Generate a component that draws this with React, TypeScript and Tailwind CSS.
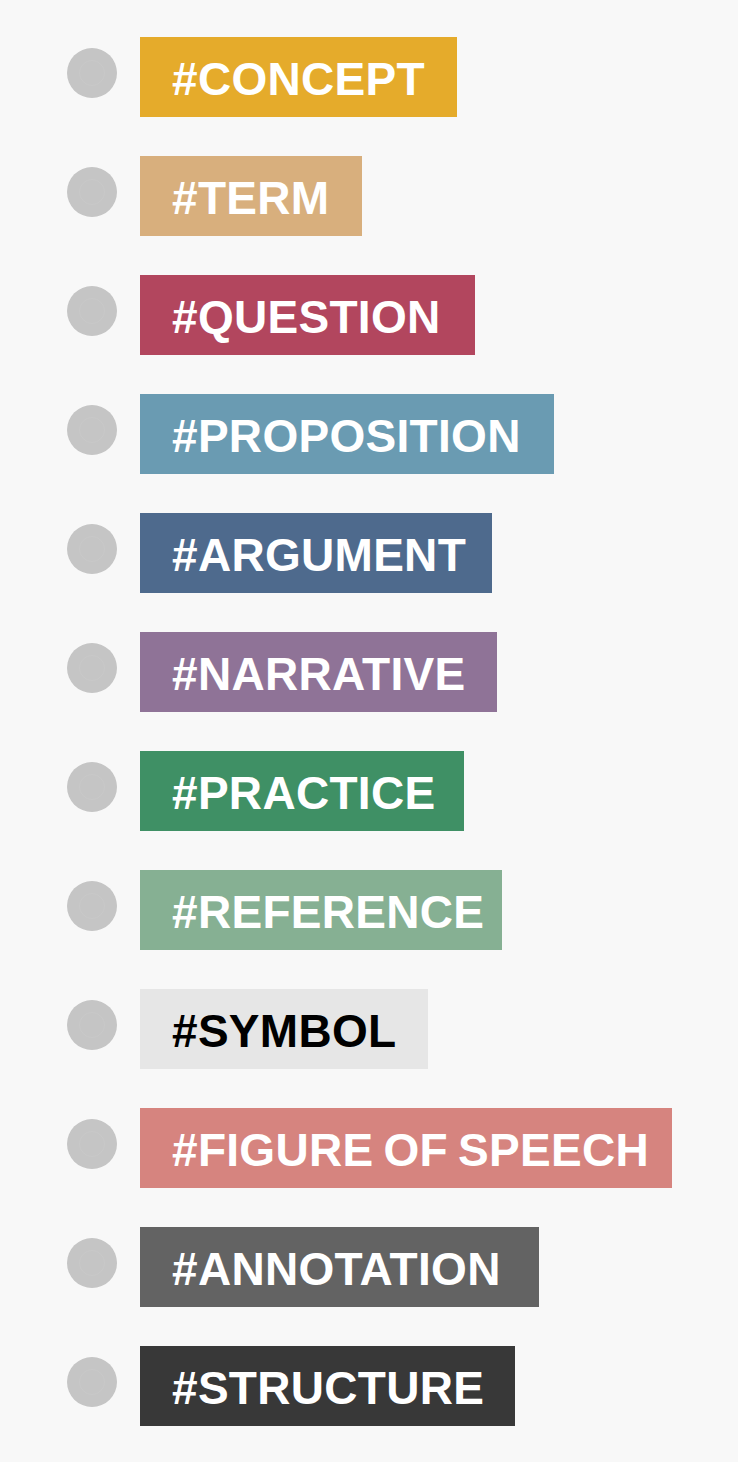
import React from "react";

const tags = [
  { label: "#CONCEPT", cls: "bg-[#e5ab2b] text-white w-[317px]" },
  { label: "#TERM", cls: "bg-[#d8af7d] text-white w-[222px]" },
  { label: "#QUESTION", cls: "bg-[#b2465e] text-white w-[335px]" },
  { label: "#PROPOSITION", cls: "bg-[#6a9bb2] text-white w-[414px]" },
  { label: "#ARGUMENT", cls: "bg-[#4e6a8d] text-white w-[352px]" },
  { label: "#NARRATIVE", cls: "bg-[#8f7397] text-white w-[357px]" },
  { label: "#PRACTICE", cls: "bg-[#3f9065] text-white w-[324px]" },
  { label: "#REFERENCE", cls: "bg-[#86b093] text-white w-[362px]" },
  { label: "#SYMBOL", cls: "bg-[#e6e6e6] text-black w-[288px]" },
  { label: "#FIGURE OF SPEECH", cls: "bg-[#d6847f] text-white w-[532px]" },
  { label: "#ANNOTATION", cls: "bg-[#636363] text-white w-[399px]" },
  { label: "#STRUCTURE", cls: "bg-[#383838] text-white w-[375px]" },
];

export default function App() {
  return (
    <div className="min-h-[1462px] w-[738px] bg-[#f8f8f8] pt-[37px] pl-[67px]" style={{ fontFamily: '"Liberation Sans", Arial, sans-serif' }}>
      <div className="flex flex-col gap-[39px]">
        {tags.map((t) => (
          <div key={t.label} className="flex items-center gap-[23px]">
            <div className="w-[50px] h-[50px] rounded-full bg-[#c5c5c5] -mt-[8px] flex items-center justify-center shrink-0">
              <div className="w-[26px] h-[26px] rounded-full border border-[#c9c9c9]" />
            </div>
            <div className={`h-[80px] flex items-center pl-[32px] whitespace-nowrap font-bold text-[46px] leading-none tracking-[0.3px] [word-spacing:-3px] ${t.cls}`}>
              <span className="pt-[3px]">{t.label}</span>
            </div>
          </div>
        ))}
      </div>
    </div>
  );
}
